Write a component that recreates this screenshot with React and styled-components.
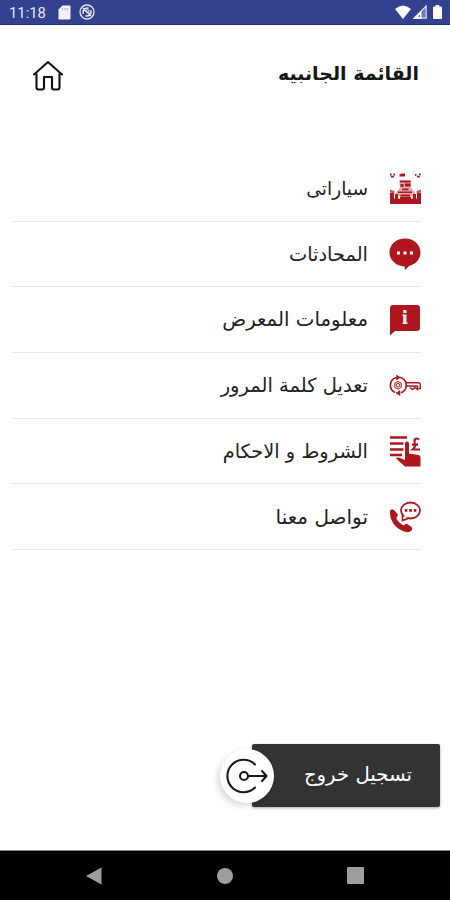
import React from 'react'
import styled, { createGlobalStyle } from 'styled-components'

const red = '#ae171f'

const GlobalStyle = createGlobalStyle`
  * {
    box-sizing: border-box;
  }
  body {
    margin: 0;
    background: #fff;
    font-family: 'DejaVu Sans', sans-serif;
  }
`

const SdCard = () => (
  <svg width="13" height="15" viewBox="0 0 13 15" fill="#f2f3fa">
    <path d="M4.5 0.5H11.5Q12.5 0.5 12.5 1.5V13.5Q12.5 14.5 11.5 14.5H1.5Q0.5 14.5 0.5 13.5V4.5Z" />
    <path d="M4.7 3v2.3M7 3v2.3M9.3 3v2.3" stroke="#a4aad5" strokeWidth="1" />
  </svg>
)

const SyncOff = () => (
  <svg width="16" height="16" viewBox="0 0 16 16" fill="none" stroke="#e6e8f5">
    <circle cx="8" cy="8" r="7" strokeWidth="1.3" />
    <path d="M4.3 9.8A4.2 4.2 0 0 1 9.5 4.3M11.7 6.3A4.2 4.2 0 0 1 6.5 11.8M4 4l8 8" strokeWidth="1.6" />
    <circle cx="8.6" cy="7" r="1.5" strokeWidth="1" />
  </svg>
)

const Wifi = () => (
  <svg width="16" height="14" viewBox="0 0 16 14" fill="#fff">
    <path d="M0 4Q8-3 16 4L8 14Z" />
  </svg>
)

const Signal = () => (
  <svg width="14" height="14" viewBox="0 0 14 14">
    <path d="M13.2 1V13.2H1Z" fill="#6f7abb" stroke="#d9dcf0" strokeWidth="1.2" />
    <path d="M0 14L8.5 5.5V14Z" fill="#fff" />
    <path d="M5 11.8L7 9.8V11.8Z" fill="#34418f" />
  </svg>
)

const Battery = () => (
  <svg width="9" height="14" viewBox="0 0 9 14" fill="#fff">
    <path d="M2.7 0h3.6v1.5H8q1 0 1 1V13q0 1-1 1H1q-1 0-1-1V2.5q0-1 1-1h1.7z" />
  </svg>
)

const Home = () => (
  <svg width="32" height="32" viewBox="0 0 32 32" fill="none" stroke="#111" strokeWidth="2.1" strokeLinecap="round" strokeLinejoin="round">
    <path d="M2 14.5L16 2L30 14.5" />
    <path d="M4.5 14V27.5Q4.5 29.5 6.5 29.5H10Q12 29.5 12 27.5V17H20V27.5Q20 29.5 22 29.5H25.5Q27.5 29.5 27.5 27.5V14" />
  </svg>
)

const Cars = () => (
  <svg width="32" height="32" viewBox="0 0 32 32" fill={red}>
    <path d="M1 26.5h31V32H1zM1 21h4v6H1zM28 21h4v6h-4z" />
    <path d="M10 8.5h12v7l4 5v6H7v-6l4-5z" opacity=".35" />
    <path d="M11 8.5h10.5v2H11zM11.5 12h3v3h-3zM16 11.5h5.5v3H16zM13 16.5h6.5v1.8H13zM9 19.5h14V21H9zM11.5 22.5H21v2h-9.5z" />
    <path d="M6 22h3v5H6zM24 22h3v5h-3zM11 25h11v2H11z" />
    <path d="M1 17.5L5.5 19v2.5L1 20.5zM32 17.5L27.5 19v2.5l4.5-1z" opacity=".7" />
    <path d="M9.5 24H11v2.5H9.5zM22 24h1.5v2.5H22zM5 23h1v3H5zM27 23h1v3h-1z" fill="#fff" />
    <path d="M10.5 2.5l2-1H16v3h-5.5z" />
    <path d="M1 2.5h1.6M4.5 2.5h1.6M2 4.6h3M26 2.8h1.5M30 2.3h1.8M28 4.6h2.8" stroke={red} strokeWidth="1.8" />
  </svg>
)

const Chat = () => (
  <svg width="32" height="32" viewBox="0 0 32 32" fill={red}>
    <path d="M16 .5C24.7 .5 31.5 6.5 31.5 14.5C31.5 21 26.5 26.5 20 28L16 32L15.5 28.5C7 28 .5 22 .5 14.5C.5 6.5 7.3 .5 16 .5Z" />
    <path d="M8 13.5h3v3H8zM14.5 13.5h3v3h-3zM21 13.5h3v3h-3z" fill="#fff" />
  </svg>
)

const Info = () => (
  <svg width="32" height="32" viewBox="0 0 32 32" fill={red}>
    <path d="M4 1H28Q31 1 31 4V24Q31 27 28 27H6L1 31.5V4Q1 1 4 1Z" />
    <path d="M14.2 6h3.3v3h-3.3zM13.5 10.5h4v8h1V20h-5v-1.5h.7V12h-.7z" fill="#ffe9e9" />
  </svg>
)

const PasswordKey = () => (
  <svg width="32" height="32" viewBox="0 0 32 32" fill="none" stroke={red}>
    <path d="M7.5 8.5A8 8 0 0 0 6 23.5M11 8.5A8 8 0 0 1 12 23.8" strokeWidth="1.7" />
    <path d="M7.5 6L11.5 8.5L7.5 11ZM11 21.5L7 24L11 26.5Z" fill={red} strokeWidth=".6" />
    <path d="M5.8 14L9 12.5l3.2 1.5v4.5L9 20l-3.2-1.5z" strokeWidth="1" />
    <circle cx="9" cy="16.2" r="1.8" strokeWidth="1" />
    <path d="M16.5 13.8H29.5Q31.3 14 31.3 16V19.5H29.5M17 17H28.5V20.5L26 18.5L23.5 20.5L21 18.5" strokeWidth="1.4" />
  </svg>
)

const Terms = () => (
  <svg width="32" height="32" viewBox="0 0 32 32" fill={red}>
    <path d="M1 2.5h17M1 8.5h13.5M1 14.5h13.5M1 20h12" stroke={red} strokeWidth="2.7" />
    <path d="M16 8.5Q16 6.5 18 6.5Q20 6.5 20 8.5V18.5L29.5 20Q31.7 20.5 31.5 23V31.5H16L7 23.5Q8.5 22 11 23L16 25Z" />
    <path d="M30 4.7Q28.8 3 26.8 3.7Q25 4.5 25.7 7.5Q27 11.5 23.8 14.5H31M23 9.7h6" fill="none" stroke={red} strokeWidth="2.2" />
  </svg>
)

const Contact = () => (
  <svg width="32" height="32" viewBox="0 0 32 32" fill={red}>
    <path d="M1 10Q2 7 5 9L8.5 13Q9.5 14.5 7.5 16.5Q7 18 10.5 21.5Q14 25 15.5 24Q17 22 19 23.5L22.5 26Q24 27.5 22.5 29.5Q20 32.5 15 30.5Q8 28 4 22Q.3 16 1 10Z" />
    <path d="M13.5 14L13.5 19.5L19 17.5" fill="#fff" stroke={red} strokeWidth="1.6" />
    <ellipse cx="21.5" cy="9.5" rx="9.5" ry="8" fill="#fff" stroke={red} strokeWidth="1.8" />
    <path d="M15.5 14.5L15 17.5L19 16Z" fill="#fff" />
    <path d="M15.7 8h2.7v2.7h-2.7zM20.2 8h2.7v2.7h-2.7zM24.7 8h2.7v2.7h-2.7z" />
  </svg>
)

const ExitArrow = () => (
  <svg width="42" height="38" viewBox="0 0 42 38" fill="none" stroke="#181818" strokeWidth="2.1" strokeLinecap="round" strokeLinejoin="round">
    <path d="M29 7.5A16.2 16.2 0 1 0 29 30.5" />
    <circle cx="18" cy="19" r="4" />
    <path d="M22 19H40.5M36 14L40.5 19L36 24" />
  </svg>
)

const items = [
  { label: 'سياراتى', icon: Cars, size: 18.6 },
  { label: 'المحادثات', icon: Chat, size: 19.4 },
  { label: 'معلومات المعرض', icon: Info, size: 19.8 },
  { label: 'تعديل كلمة المرور', icon: PasswordKey, size: 19.5 },
  { label: 'الشروط و الاحكام', icon: Terms, size: 19.4 },
  { label: 'تواصل معنا', icon: Contact, size: 20 },
]

function App() {
  return (
    <Screen>
      <GlobalStyle />
      <StatusBar>
        <Clock>11:18</Clock>
        <SdCard />
        <SyncOff />
        <StatusIcons>
          <Wifi />
          <Signal />
          <Battery />
        </StatusIcons>
      </StatusBar>
      <Header>
        <Title>القائمة الجانبيه</Title>
        <Home />
      </Header>
      <Menu>
        {items.map(({ label, icon: Icon, size }) => (
          <MenuItem key={label}>
            <Icon />
            <Label $size={size}>{label}</Label>
          </MenuItem>
        ))}
      </Menu>
      <Footer>
        <Logout>
          <LogoutText>تسجيل خروج</LogoutText>
          <LogoutBadge>
            <ExitArrow />
          </LogoutBadge>
        </Logout>
      </Footer>
      <NavBar>
        <svg width="16" height="18" viewBox="0 0 16 18" fill="#9e9e9e">
          <path d="M0 9L15.5 .5V17.5Z" />
        </svg>
        <NavCircle />
        <NavSquare />
      </NavBar>
    </Screen>
  )
}

const Screen = styled.div`
  width: 450px;
  height: 900px;
  display: flex;
  flex-direction: column;
  background: #fff;
  overflow: hidden;
`

const StatusBar = styled.div`
  height: 25px;
  flex: none;
  display: flex;
  align-items: center;
  padding: 0 8px 0 9px;
  background: #34418f;
  border-bottom: 1px solid #22307f;
  svg + svg {
    margin-left: 8px;
  }
`

const Clock = styled.span`
  width: 49px;
  padding-top: 2px;
  font: 400 14.8px Roboto, sans-serif;
  color: #e6e8f5;
`

const StatusIcons = styled.div`
  display: flex;
  align-items: center;
  margin-left: auto;
  svg + svg {
    margin-left: 2px;
  }
  svg:last-child {
    margin-left: 6px;
  }
`

const Header = styled.header`
  direction: rtl;
  display: flex;
  align-items: center;
  justify-content: space-between;
  height: 102px;
  flex: none;
  padding: 0 31px 0 32px;
`

const Title = styled.h1`
  margin: 0 0 6px;
  font-size: 19px;
  font-weight: 700;
  color: #171717;
  white-space: nowrap;
`

const Menu = styled.ul`
  direction: rtl;
  list-style: none;
  margin: 29px 29px 0 12px;
  padding: 0;
`

const MenuItem = styled.li`
  height: 65.7px;
  display: flex;
  align-items: center;
  gap: 21px;
  border-bottom: 1px solid #e8e8e8;
`

const Label = styled.span`
  padding-top: 1px;
  font-size: ${({ $size }) => $size}px;
  line-height: 24px;
  color: #222;
  white-space: nowrap;
`

const Footer = styled.div`
  direction: rtl;
  margin-top: auto;
  padding: 0 10px 43px;
`

const Logout = styled.button`
  position: relative;
  display: flex;
  align-items: center;
  width: 188px;
  height: 63px;
  padding: 0 28px 3px 0;
  border: 0;
  border-radius: 2px;
  background: #333;
  color: #fff;
  font-family: inherit;
  box-shadow: 0 1px 3px rgba(0, 0, 0, 0.35);
`

const LogoutText = styled.span`
  font-size: 19.7px;
  white-space: nowrap;
`

const LogoutBadge = styled.span`
  position: absolute;
  left: -32px;
  top: 5px;
  width: 54px;
  height: 54px;
  display: flex;
  align-items: center;
  justify-content: center;
  border-radius: 50%;
  background: #fff;
  box-shadow: -3px 3px 6px rgba(0, 0, 0, 0.14);
`

const NavBar = styled.nav`
  height: 50px;
  flex: none;
  display: flex;
  align-items: center;
  justify-content: space-between;
  padding: 0 86px;
  background: #000;
  border-top: 1px solid #888;
`

const NavCircle = styled.span`
  width: 16px;
  height: 16px;
  border-radius: 50%;
  background: #9e9e9e;
`

const NavSquare = styled.span`
  width: 17px;
  height: 17px;
  border-radius: 1px;
  background: #9e9e9e;
`

export default App
